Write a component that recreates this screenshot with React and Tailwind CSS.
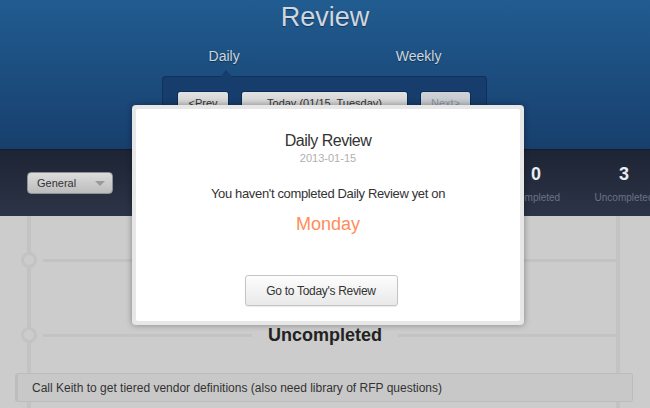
import React from 'react';

const font = { fontFamily: '"Liberation Sans", Arial, sans-serif' };

function NavButton({ children, width, disabled }) {
    return (
        <button
            className={`h-[24px] ${width} rounded-[3px] border border-[#0c2c55] bg-gradient-to-b text-[11px] leading-none ${disabled
                ? 'from-[#cfd3d8] to-[#b9bec5] text-[#8c949e]'
                : 'from-[#e2e2e2] to-[#c4c4c4] text-[#333]'
                }`}
        >
            {children}
        </button>
    );
}

function Stat({ value, label }) {
    return (
        <div className="w-[88px] flex flex-col items-center">
            <div className="text-[18px] leading-[22px] font-bold text-[#e9ecf1]">{value}</div>
            <div className="mt-[6px] text-[10px] leading-[14px] text-[#6b7385]">{label}</div>
        </div>
    );
}

function Dot() {
    return <div className="-ml-[10px] w-[16px] h-[16px] shrink-0 rounded-full border-[3px] border-[#c3c3c3] bg-[#cccccc]" />;
}

export default function App() {
    return (
        <div className="relative w-[650px] h-[408px] overflow-hidden flex flex-col bg-[#cccccc]" style={font}>
            {/* header */}
            <div className="h-[149px] shrink-0 flex flex-col bg-gradient-to-b from-[#215c90] to-[#173f6d]">
                <h1 className="text-center text-[27px] leading-[34px] text-[#cfd7e0] [text-shadow:0_1px_1px_rgba(0,0,0,0.4)]">Review</h1>
                <div className="mt-[12px] flex justify-center gap-[156px] text-[14px] leading-[20px] text-[#cdd5de] [text-shadow:0_1px_1px_rgba(0,0,0,0.4)]">
                    <span>Daily</span>
                    <span>Weekly</span>
                </div>
                <div className="relative mt-[10px] ml-[162px] w-[325px] flex-1 rounded-t-[4px] border border-b-0 border-[#0f315d] bg-[#163d6b] pt-[14px] pl-[14px] flex items-start gap-[12px]">
                    <div className="absolute -top-[7px] left-[57px] w-0 h-0 border-x-[6px] border-x-transparent border-b-[7px] border-b-[#163d6b]" />
                    <NavButton width="w-[52px]">&lt;Prev</NavButton>
                    <NavButton width="w-[167px]">Today (01/15, Tuesday)</NavButton>
                    <NavButton width="w-[51px]" disabled>Next&gt;</NavButton>
                </div>
            </div>

            {/* filter bar */}
            <div className="h-[67px] shrink-0 flex items-center bg-gradient-to-b from-[#1d2434] to-[#2c3447] border-t border-[#141b29]">
                <div className="ml-[27px] w-[86px] h-[22px] rounded-[4px] border border-[#8d9096] bg-gradient-to-b from-[#dcdcdc] to-[#bcbcbc] flex items-center justify-between pl-[9px] pr-[7px] text-[11px] text-[#333]">
                    <span>General</span>
                    <span className="w-0 h-0 border-x-[5px] border-x-transparent border-t-[5px] border-t-[#9a9a9a]" />
                </div>
                <div className="ml-auto -mr-[18px] self-start pt-[13px] flex">
                    <Stat value="0" label="Completed" />
                    <Stat value="3" label="Uncompleted" />
                </div>
            </div>

            {/* timeline */}
            <div className="flex-1 mx-[30px] ml-[27px] border-x-4 border-[#c3c3c3] pt-[36px]">
                <div className="flex items-center">
                    <Dot />
                    <div className="ml-[6px] flex-1 h-[3px] bg-[#c3c3c3]" />
                </div>
                <div className="mt-[56px] flex items-center">
                    <Dot />
                    <div className="ml-[6px] flex-1 h-[3px] bg-[#c3c3c3]" />
                    <h2 className="px-[16px] text-[18px] leading-[22px] font-bold text-[#222]">Uncompleted</h2>
                    <div className="w-[218px] h-[3px] bg-[#c3c3c3]" />
                </div>
                <div className="mt-[27px] -ml-[16px] -mr-[17px] h-[29px] rounded-[3px] border border-[#bcbcbc] border-l-[3px] border-l-[#bdbdbd] bg-[#c8c8c8] flex items-center pl-[14px] text-[12px] text-[#333]">
                    Call Keith to get tiered vendor definitions (also need library of RFP questions)
                </div>
            </div>

            {/* modal */}
            <div className="absolute left-[132px] top-[105px] w-[392px] h-[220px] rounded-[4px] bg-[#e7e7e7] p-[4px] shadow-[0_0_6px_rgba(0,0,0,0.35)]">
                <div className="h-full rounded-[2px] bg-white flex flex-col items-center pt-[22px]">
                    <div className="text-[16px] leading-[20px] tracking-[-0.5px] text-[#333]">Daily Review</div>
                    <div className="text-[11px] leading-[14px] text-[#b0b0b0]">2013-01-15</div>
                    <div className="mt-[21px] text-[13px] leading-[16px] tracking-[-0.35px] text-[#333]">You haven't completed Daily Review yet on</div>
                    <div className="mt-[10px] text-[18px] leading-[24px] text-[#ff8d5c]">Monday</div>
                    <button className="mt-[39px] -ml-[14px] w-[153px] h-[31px] rounded-[3px] border border-[#c4c4c4] bg-gradient-to-b from-[#fdfdfd] to-[#e9e9e9] text-[12px] tracking-[-0.3px] text-[#333] shadow-[0_1px_1px_rgba(0,0,0,0.08)]">
                        Go to Today's Review
                    </button>
                </div>
            </div>
        </div>
    );
}
